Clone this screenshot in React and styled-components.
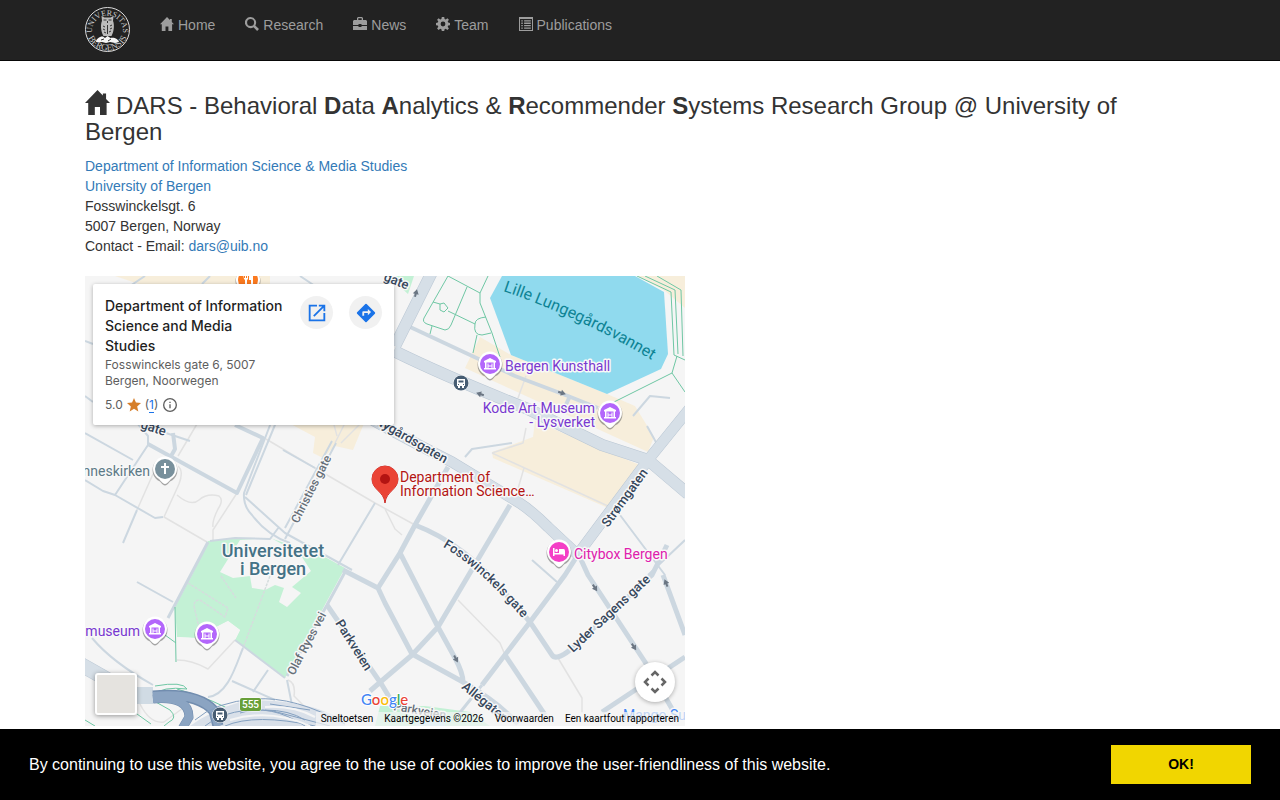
import React from 'react'
import styled, { createGlobalStyle } from 'styled-components'

const GlobalStyle = createGlobalStyle`
    * {
        box-sizing: border-box;
    }
    body {
        margin: 0;
        background: #fff;
        color: #333;
        font: 14px/20px "Helvetica Neue", Helvetica, "Liberation Sans", sans-serif;
    }
    a {
        color: #337ab7;
        text-decoration: none;
    }
`

const Container = styled.div`
    max-width: 1140px;
    margin: 0 auto;
    padding: 0 15px;
`

const Navbar = styled.nav`
    background: #222;
    border-bottom: 1px solid #080808;
`

const NavInner = styled(Container)`
    display: flex;
    align-items: flex-start;
    min-height: 60px;
`

const Brand = styled.a`
    display: block;
    padding: 7px 15px 0 0;
    svg {
        display: block;
    }
`

const NavList = styled.ul`
    display: flex;
    flex-wrap: wrap;
    margin: 0;
    padding: 0;
    list-style: none;
`

const NavLink = styled.a`
    display: flex;
    gap: 4px;
    padding: 15px;
    color: #9d9d9d;
    &:hover {
        color: #fff;
    }
`

const Glyph = styled.svg`
    width: ${props => props.$size}px;
    height: ${props => props.$size}px;
    margin-top: 2px;
    fill: currentColor;
    flex: none;
`

const Title = styled.h3`
    margin: 0;
    padding: 32px 0 10px;
    font-size: 24px;
    line-height: 26px;
    font-weight: normal;
    ${Glyph} {
        margin: -6px 6px 0 0;
        vertical-align: -1px;
    }
`

const Address = styled.address`
    margin-bottom: 20px;
    padding-top: 1px;
    font-style: normal;
`

const MapFrame = styled.section`
    position: relative;
    max-width: 600px;
    height: 450px;
    overflow: hidden;
    background: #f5f5f5;
    font-family: Roboto, sans-serif;
`

const MapCanvas = styled.svg`
    display: block;
    width: 100%;
    height: 100%;
    paint-order: stroke;
`

const Card = styled.div`
    position: absolute;
    top: 8px;
    left: 8px;
    display: flex;
    width: 301px;
    padding: 12px;
    background: #fff;
    border-radius: 2px;
    box-shadow: 0 1px 4px rgba(0, 0, 0, 0.3);
    font-family: Inter, sans-serif;
`

const CardText = styled.div`
    flex: 1;
`

const CardTitle = styled.h4`
    max-width: 179px;
    margin: 0;
    color: #1f1f1f;
    font-size: 14px;
    line-height: 20px;
    font-weight: 500;
`

const CardAddress = styled.div`
    max-width: 160px;
    padding-top: 1px;
    color: #5e5e5e;
    font-size: 12px;
    line-height: 16px;
`

const Rating = styled.div`
    display: flex;
    align-items: center;
    gap: 4px;
    padding-top: 7px;
    color: #5e5e5e;
    font-size: 12px;
    line-height: 17px;
    a {
        color: #1a73e8;
        border-bottom: 1px solid #1a73e8;
    }
`

const CardActions = styled.div`
    display: flex;
    gap: 16px;
`

const RoundButton = styled.button`
    display: grid;
    place-items: center;
    width: 33px;
    height: 33px;
    padding: 0;
    border: 0;
    border-radius: 50%;
    background: #f1f1f1;
`

const LayerButton = styled.button`
    position: absolute;
    left: 10px;
    bottom: 11px;
    width: 42px;
    height: 42px;
    border: 2px solid #fff;
    border-radius: 3px;
    background: #e5e3df;
    box-shadow: 0 1px 5px rgba(0, 0, 0, 0.4);
`

const CameraButton = styled(RoundButton)`
    position: absolute;
    right: 10px;
    bottom: 24px;
    width: 40px;
    height: 40px;
    background: #fff;
    box-shadow: 0 1px 4px rgba(0, 0, 0, 0.3);
`

const Credits = styled.div`
    position: absolute;
    right: 0;
    bottom: 0;
    display: flex;
    height: 14px;
    background: rgba(245, 245, 245, 0.7);
    color: #000;
    font-size: 10px;
    line-height: 14px;
    a, button, span {
        padding: 0 6px 0 5px;
        border: 0;
        background: none;
        color: inherit;
        font: inherit;
    }
`

const CookieBar = styled.div`
    position: fixed;
    right: 0;
    bottom: 0;
    left: 0;
    display: flex;
    align-items: center;
    justify-content: space-between;
    padding: 16px 29px;
    background: #000;
    color: #fff;
    font-size: 16px;
    line-height: 24px;
`

const CookieButton = styled.button`
    width: 140px;
    height: 39px;
    border: 0;
    background: #f1d600;
    color: #000;
    font: bold 14px/21px "Liberation Sans", sans-serif;
`

const glyphs = {
    home: <path d="M7 0 0 7.300h1.800V14h3.700V9.500h2.900V14h3.700V7.300H14l-2.200-2.300V2H10v1.100z" />,
    search: <path fillRule="evenodd" d="M5.600 0a5.600 5.600 0 0 1 4.700 8.500L14 12.100 12.100 14l-3.600-3.700A5.600 5.600 0 1 1 5.600 0zm0 2.100a3.500 3.500 0 1 0 0 7 3.500 3.500 0 0 0 0-7z" />,
    news: <path fillRule="evenodd" d="M5 0h4l1 1v2h3l1 1v4H8.500V7h-3v1H0V4l1-1h3V1zm.3 1.200V3h3.400V1.200zM0 9h5.500v1h3V9H14v4H0z" />,
    team: <path fillRule="evenodd" d="M5.800 0h2.400l.4 2 1.100.5 1.700-1.200 1.500 1.500-1.200 1.700.5 1.100 1.800.3v2.300l-1.800.4-.5 1.100 1.200 1.700-1.500 1.600-1.700-1.200-1.100.4-.4 1.800H5.800l-.4-1.800-1.100-.4L2.600 13l-1.500-1.600 1.200-1.700-.5-1.100L0 8.200V5.900l1.800-.3.500-1.100-1.200-1.700 1.500-1.500 1.700 1.200L5.400 2zM7 4.600a2.400 2.400 0 1 0 0 4.800 2.400 2.400 0 0 0 0-4.800z" />,
    list: <path fillRule="evenodd" d="M0 0h14v14H0zm1 2v11h12V2zm1.300 1.200h1.500v1.300H2.300zm2.800 0h6.700v1.300H5.100zM2.300 5.600h1.500v1.300H2.300zm2.800 0h6.700v1.300H5.100zM2.300 8h1.500v1.300H2.300zm2.800 0h6.700v1.300H5.100zM2.300 10.400h1.500v1.300H2.300zm2.800 0h6.700v1.300H5.100z" />,
}

const links = [
    ['home', 'Home'],
    ['search', 'Research'],
    ['news', 'News'],
    ['team', 'Team'],
    ['list', 'Publications'],
]

function Icon({ name, size = 14 }) {
    return <Glyph viewBox="0 0 14 14" $size={size} aria-hidden="true">{glyphs[name]}</Glyph>
}

function Logo() {
    return (
        <svg width="45" height="45" viewBox="0 0 45 45" aria-label="Universitas Bergensis">
            <circle cx="22.500" cy="22.500" r="22" fill="none" stroke="#ddd" />
            <path id="sealTop" d="M7.500 28a15.500 15.500 0 1 1 30 0" fill="none" />
            <path id="sealBottom" d="M1.500 22.500a21 21 0 0 0 42 0" fill="none" />
            <g fill="#ccc" fontFamily="Liberation Serif, serif" fontSize="8" textAnchor="middle">
                <text><textPath href="#sealTop" startOffset="50%">UNIVERSITAS</textPath></text>
                <text fontSize="9"><textPath href="#sealBottom" startOffset="50%">BERGENSIS</textPath></text>
            </g>
            <path d="M16.500 9l3 1.500h6l3-1.500-.5 5c1.500 3 1.300 10-1.500 15h-8c-3-5-3-12-1.500-15z" fill="#bbb" />
            <path d="M11 35c0-3 4-6 7-5.500l2 1.500 2.500-2 3 2c4-1 8 1.500 8.500 4l-4 1-5-1-4 1-4-1z" fill="#f5f5f5" />
            <path d="M18.500 13h3m2 0h3M22.500 14v2M18 19l2 1m-2 2 2 1m-1 2 2 1m4-7 2-1m-2 4 2-1m-3 4 2-1M22.500 18v9M16 33l3-1m4 2 3-2" stroke="#333" strokeWidth="1" fill="none" />
        </svg>
    )
}

// width, colour, path
const roads = [
    // footpaths
    [1.5, '#e2e2e2', 'M112 148 93 180M68 198 52 234M93 190q6 5 1 18l-15 33 43 25M92 219q14 12 22 5t20-4q5 4-1 13-6 12-5 18M152 217l-24 37v11M181 163l49 29 60 35 40 22M300 233l10 20 7 6M407 177l31-10 3-15M439 192l-7 24M373 324l42 43 5 12M473 382l24 40v15M92 384q15 0 31 9l27-29M203 404q8 3 6 16l20 20M55 428q10 20 24 18l30-22M260 147l-10 20M248 145l4 15M276 147l-20 20M407 177l116 53M441 100l-8 22'],
    [4, '#ccd7e0', 'M150 149l28 13-26 55-89-49M88 157l2 16-5 9M323 50l107 50 53 20 30 12M485 120l-7 15'],
    [2, '#ccd7e0', 'M0 157l48 27M53 148l10 12v9l-33 50M0 204l18 11 12 4 40 23 8-1M52 234 38 267M51 147l54 18M160 221l40 36 67 37M251 167l-51 96M247 165l-47 87M187 144l-28 73q-1 13 8 22 15 20 38 28M192 144l-31 75M125 265l25-3 35 1 9-12M198 174l32 18M290 227l-37 62M380 181l7-8 40-6M535 239l45 60M600 264l-37 35M447 284l25 22M52 306l36 20M7 362q20 24 61 47M147 405l43 19M183 394l-15 22M158 372c-7 17-15 47-35 49M150 364l50 38M202 404l6 30 4 16M0 65l8 3M0 120l8 6M548 140l17-20 20 2M562 150l10 18M60 0 45 10M125 0l-8 8M215 0l15 10'],
    [3, '#ccd7e0', 'M123 266 83 342M397 409l-24 30M260 296l-18 33M242 329l-40 71'],
    [5, '#ccd7e0', 'M258 294l35 18 7 15 27 51 51 28M363 191l-33 58-15 28-22 35M315 277l38 74 17 31q8 15 8 24M425 229l-72 122-26 28-27 23-15 13M330 249q50 19 90 68l25 29 22 33q4 6 18-5l82-75 15-30M494 277l-14 22-35 47-48 63M420 379l40 60M493 277l10 22 57 87 30 52M578 299l22 60M517 436l83-55M242 329l55 80 15 25M378 406q35 20 55 42'],
]

const mainRoads = [
    [11, 'M309 75q55 27 134 58l74 36 46 15 40 34'],
    [10, 'M230 110q50 32 137 76l66 40q13 8 30 25l30 28'],
    [10, 'M493 278l70-94 42-52'],
    [11, 'M310 70 347-4'],
    [14, 'M-5 388l60 34'],
]

const gardenPaths = 'M363 0l-24 42q-2 4 3 6l18 6q4 0 6-5l16-38M348 26l7 2 4-1 4 5-4 4-4-2v-6M363 35l27 13M403 0l-8 17v10l12 30 8 24M363 0l32 17M401 41q-11 1-11 7-2 11 7 11l9-2M392 59l-4 18M347 50l-2 8M552 0l34 16 3 63 11 5M560 0l30 14 3 64M572 0l24 14 2 66M592 80l-5 17-60 30M587 97l13 19M90 331l1 55M80 359l11 8M70 410q28-5 32 3-25-3-33 6v6l16 9q8 8-1 12l-5 4M92 413q41 12 58 24l-4 13M0 444l10 6M52 438l14 10'

function Label({ x, y, color = '#36475c', size = 13, rotate = 0, weight = 500, anchor = 'start', children }) {
    return (
        <text
            x={x}
            y={y}
            fill={color}
            fontSize={size}
            fontWeight={weight}
            textAnchor={anchor}
            stroke="#f8f8f8"
            strokeWidth="3"
            strokeLinejoin="round"
            transform={`rotate(${rotate} ${x} ${y})`}
        >
            {children}
        </text>
    )
}

const pinIcons = {
    museum: <path fillRule="evenodd" d="M0-6-6-3v1.500h1V4h-1v1.500H6V4H5v-5.500h1V-3zM-3.500-1.500h7V4h-1v-4.500h-1v2h-3v-2h-1V4h-1zM-1.500 2.500h3V4h-3z" />,
    church: <path d="M-1-6h2v3h3v2H1v6h-2v-6h-3v-2h3z" />,
    hotel: <path fillRule="evenodd" d="M-6-4h1.500v5H0v-4h4.500Q6-3 6-1v5H4.500V2.500h-9V4H-6zM-2.500-3a1.500 1.500 0 1 1 0 3 1.500 1.500 0 0 1 0-3z" />,
    food: <path d="M-5-6h1v4h1v-4h1v4h1v-4h1v5l-1 1v6h-2V0l-1-1zM5-6v11H3V0H1v-3q0-3 4-3z" />,
}

function Pin({ x, y, color = '#b366fb', icon = 'museum' }) {
    return (
        <g transform={`translate(${x} ${y})`}>
            <path d="M0 15.500q-2 0-5-4A12.500 12.500 0 1 1 5 11.500q-3 4-5 4z" fill="#555" opacity=".5" transform="translate(0 1)" />
            <path d="M0 15q-2 0-6-5A12 12 0 1 1 6 10q-4 5-6 5z" fill="#fff" />
            <circle r="10" fill={color} />
            <g fill="#fff">{pinIcons[icon]}</g>
        </g>
    )
}

function Stop({ x, y }) {
    return (
        <g transform={`translate(${x} ${y})`}>
            <circle r="7.500" fill="#475d73" stroke="#fff" />
            <path fillRule="evenodd" fill="#fff" d="M-4-4h8v7H3v2H1V3h-2v2h-2V3h-1zm1.500 1.500v2h5v-2zM-3 1v1h1V1zm5 0v1h1V1z" />
        </g>
    )
}

// one-way arrows: x, y, rotation
const arrows = [
    [331, 17, -75],
    [395, 118, 197],
    [477, 117, 18],
    [510, 312, 57],
    [549, 371, 57],
    [371, 383, 62],
    [581, 307, -112],
]

function StreetMap() {
    return (
        <MapCanvas viewBox="0 0 600 450" preserveAspectRatio="xMinYMin slice" role="img" aria-label="Map of Bergen">
            <g fill="#f7eedb">
                <path d="M30 0h155v10H60zM395 61l31 18 96 39 28 12 19 31-6 15-46-21-137-63z" />
                <path d="M450 145l63 27 42 17-32 43-115-50-1-6 41-15zM200 145l30 16-2 16 10 5 12-12 18 4 12-29zM553 0l27 15 20 17V0z" />
            </g>
            <path d="M417 0l-12 22 21 57 96 39 54-25 7-15-4-62-29-16z" fill="#90daee" />
            <path d="M303 0h26l-6 18zM123 265l34-3h28l55 19 20 11-60 110-50-38 5-10-12-9-33 17-18-1-2-30 17-32z" fill="#c3f1d5" />
            <path d="M155 264l31-2 29 16 11 17-19 16 9 6-14 14-8-5 5-14-9-3-10 5-13-2-2-12-17 2-13-6 10-16zM110 362l33-17 12 9-5 10-27 29-31-9v-23z" fill="#f5f5f5" />
            <path d="M295 430h45l45 6 20 14H290z" fill="#c3f1d5" />
            <path d="M335 438h25v12h-30z" fill="#c5e9f4" />
            <path d="M103 307l40 25-3 9-25-17q-6 0-6 6l5 22M136 300l15 22M185 300l-27 72" stroke="#d5dddd" strokeWidth="1.500" strokeDasharray="3 1" fill="none" />
            <g fill="none" strokeLinejoin="round">
                {roads.map(([width, color, d]) => <path key={d} d={d} stroke={color} strokeWidth={width} />)}
                {mainRoads.map(([width, d]) => <path key={d} d={d} stroke="#b9c6d3" strokeWidth={width + 1} />)}
                {mainRoads.map(([width, d]) => <path key={d} d={d} stroke="#d6dfe7" strokeWidth={width} />)}
                <path d={gardenPaths} stroke="#6fc7a4" />
            </g>
            <path d="M105 450q22-16 50-24 35-5 75 6l30 11v7z" fill="#d9e0e9" />
            <path d="M52 411h16v17H52z" fill="#d0dbe4" />
            <g fill="none">
                <path d="M68 420q44-4 61 15l4 15" stroke="#728daf" strokeWidth="11" />
                <path d="M68 423q36-3 36 18l-7 12" stroke="#728daf" strokeWidth="9" />
                <path d="M68 420q44-4 61 15l4 15M68 423q36-3 36 18l-7 12" stroke="#8ba4c2" strokeWidth="8" />
                <path d="M110 444q20-18 60-21t90 25M120 450q25-20 68-15l57 15M140 450q30-13 90 0M180 434q24 0 40 10M185 428l40 6M155 437q30-10 65 13" stroke="#84a0c0" />
                <path d="M145 444q40-12 80 6M180 431q28-2 50 10" stroke="#f5f5f5" strokeWidth="2" />
            </g>
            {arrows.map(([x, y, angle]) => (
                <path key={`${x}-${y}`} d="M-4-1h3v-2l5 3-5 3V1h-3z" fill="#6b7683" transform={`translate(${x} ${y}) rotate(${angle})`} />
            ))}
            <path id="lakeLabel" d="M418 15q24 8 47 18 61 25 108 55" fill="none" />
            <text fill="#0d8394" fontSize="16"><textPath href="#lakeLabel">Lille Lungegårdsvannet</textPath></text>
            <Label x={298} y={4} rotate={22}>gate</Label>
            <Label x={55} y={152} rotate={18}>gate</Label>
            <Label x={289} y={147} rotate={30}>Nygårdsgaten</Label>
            <Label x={213} y={248} rotate={-63} color="#666f78" size={12}>Christies gate</Label>
            <path id="fossLabel" d="M358 271q37 21 80 72" fill="none" />
            <text fill="#36475c" fontSize="13" fontWeight="500" stroke="#f8f8f8" strokeWidth="3"><textPath href="#fossLabel">Fosswinckels gate</textPath></text>
            <Label x={523} y={252} rotate={-54}>Strømgaten</Label>
            <Label x={488} y={377} rotate={-43}>Lyder Sagens gate</Label>
            <Label x={250} y={347} rotate={58}>Parkveien</Label>
            <Label x={209} y={400} rotate={-62} color="#666f78" size={12}>Olaf Ryes vei</Label>
            <Label x={376} y={412} rotate={39}>Allégaten</Label>
            <Label x={308} y={434} rotate={10} color="#666f78" size={12}>Parkveien</Label>
            <Label x={188} y={281} size={18} color="#447286" anchor="middle">Universitetet</Label>
            <Label x={188} y={299} size={18} color="#447286" anchor="middle">i Bergen</Label>
            <Label x={420} y={95} size={14} color="#7839d0" weight={400}>Bergen Kunsthall</Label>
            <Label x={510} y={137} size={14} color="#7839d0" weight={400} anchor="end">Kode Art Museum</Label>
            <Label x={510} y={151} size={14} color="#7839d0" weight={400} anchor="end">- Lysverket</Label>
            <Label x={55} y={360} size={14} color="#7839d0" weight={400} anchor="end">museum</Label>
            <Label x={65} y={200} size={14} color="#5d7a87" weight={400} anchor="end">Johanneskirken</Label>
            <Label x={489} y={283} size={14} color="#df20ad" weight={400}>Citybox Bergen</Label>
            <Label x={315} y={206} size={14} color="#b31412" weight={400}>Department of</Label>
            <Label x={315} y={220} size={14} color="#b31412" weight={400}>Information Science…</Label>
            <Label x={538} y={444} size={14} color="#4285f4" weight={400}>Mango Sushi</Label>
            <Pin x={163} y={4} color="#fb7a20" icon="food" />
            <Pin x={405} y={88} />
            <Pin x={525} y={137} />
            <Pin x={70} y={353} />
            <Pin x={122} y={358} />
            <Pin x={80} y={193} color="#78909c" icon="church" />
            <Pin x={474} y={276} color="#f43fc6" icon="hotel" />
            <Stop x={376} y={107} />
            <Stop x={135} y={439} />
            <rect x="155" y="422" width="21" height="13" rx="2" fill="#689f38" stroke="#fff" />
            <text x="165.500" y="432" fill="#fff" fontSize="10" fontWeight="500" textAnchor="middle">555</text>
            <path d="M300 227c-1-12-13-13-13-24a13 13 0 0 1 26 0c0 11-12 12-13 24z" fill="#ea4335" stroke="#c5221f" />
            <circle cx="300" cy="203" r="5" fill="#b31412" />
            <text x="276" y="429" fontFamily="Lato, sans-serif" fontSize="15" fontWeight="500" stroke="#fff" strokeWidth="2">
                <tspan fill="#4285f4">G</tspan>
                <tspan fill="#ea4335">o</tspan>
                <tspan fill="#fbbc04">o</tspan>
                <tspan fill="#4285f4">g</tspan>
                <tspan fill="#34a853">l</tspan>
                <tspan fill="#ea4335">e</tspan>
            </text>
        </MapCanvas>
    )
}

function PlaceCard() {
    return (
        <Card>
            <CardText>
                <CardTitle>Department of Information Science and Media Studies</CardTitle>
                <CardAddress>Fosswinckels gate 6, 5007 Bergen, Noorwegen</CardAddress>
                <Rating>
                    5.0
                    <svg width="14" height="14" viewBox="0 0 24 24" fill="#d67e29"><path d="M12 18.300 19.400 23l-2-8.600L24 8.700l-8.700-.8L12 0 8.700 7.900 0 8.700l6.600 5.700-2 8.600z" /></svg>
                    <span>(<a href="#reviews">1</a>)</span>
                    <svg width="16" height="16" viewBox="0 0 24 24" fill="none" stroke="#5e5e5e" strokeWidth="2"><circle cx="12" cy="12" r="9.500" /><path d="M12 11v6M12 7v2" /></svg>
                </Rating>
            </CardText>
            <CardActions>
                <RoundButton aria-label="Open in Maps">
                    <svg width="22" height="22" viewBox="0 0 24 24" fill="#1a73e8"><path d="M19 19H5V5h7V3H3v18h18v-9h-2zM14 3v2h3.600l-9.800 9.800 1.400 1.400L19 6.400V10h2V3z" /></svg>
                </RoundButton>
                <RoundButton aria-label="Directions">
                    <svg width="22" height="22" viewBox="0 0 24 24" fill="#1a73e8"><path d="m21.700 11.300-9-9a1 1 0 0 0-1.400 0l-9 9a1 1 0 0 0 0 1.400l9 9a1 1 0 0 0 1.400 0l9-9a1 1 0 0 0 0-1.400zM14 14.500V12h-4v3H8v-4q0-1 1-1h5V7.500l3.500 3.500z" /></svg>
                </RoundButton>
            </CardActions>
        </Card>
    )
}

function App() {
    return (
        <>
            <GlobalStyle />
            <Navbar>
                <NavInner>
                    <Brand href="#"><Logo /></Brand>
                    <NavList>
                        {links.map(([icon, label]) => (
                            <li key={label}>
                                <NavLink href={`#${label.toLowerCase()}`}><Icon name={icon} />{label}</NavLink>
                            </li>
                        ))}
                    </NavList>
                </NavInner>
            </Navbar>
            <Container as="main">
                <Title>
                    <Icon name="home" size={25} />
                    DARS - Behavioral <b>D</b>ata <b>A</b>nalytics &amp; <b>R</b>ecommender <b>S</b>ystems Research Group @ University of Bergen
                </Title>
                <Address>
                    <a href="#department">Department of Information Science &amp; Media Studies</a><br />
                    <a href="#university">University of Bergen</a><br />
                    Fosswinckelsgt. 6<br />
                    5007 Bergen, Norway<br />
                    Contact - Email: <a href="mailto:dars@uib.no">dars@uib.no</a>
                </Address>
                <MapFrame>
                    <StreetMap />
                    <PlaceCard />
                    <LayerButton aria-label="Satellite view" />
                    <CameraButton aria-label="Map camera controls">
                        <svg width="24" height="24" viewBox="0 0 24 24" fill="none" stroke="#666" strokeWidth="2.500"><path d="m8.500 5.500 3.500-3.500 3.500 3.500M8.500 18.500l3.500 3.500 3.500-3.500M5.500 8.500 2 12l3.500 3.500M18.500 8.500 22 12l-3.500 3.500" /></svg>
                    </CameraButton>
                    <Credits>
                        <button>Sneltoetsen</button>
                        <span>Kaartgegevens ©2026</span>
                        <a href="#terms">Voorwaarden</a>
                        <a href="#report">Een kaartfout rapporteren</a>
                    </Credits>
                </MapFrame>
            </Container>
            <CookieBar role="dialog" aria-label="Cookie consent">
                <span>By continuing to use this website, you agree to the use of cookies to improve the user-friendliness of this website.</span>
                <CookieButton>OK!</CookieButton>
            </CookieBar>
        </>
    )
}

export default App
